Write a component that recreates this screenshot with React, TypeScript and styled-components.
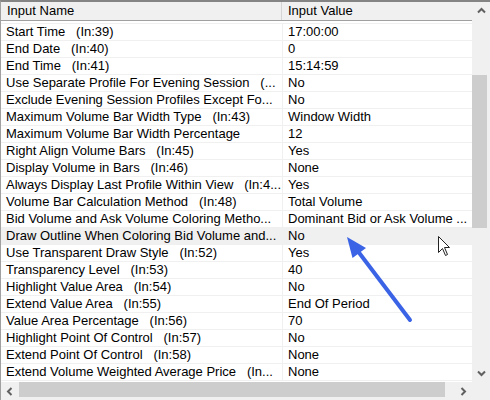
import styled, { createGlobalStyle } from "styled-components";

type Input = { name: string; value: string };

const inputs: Input[] = [
  { name: "Start Time   (In:39)", value: "17:00:00" },
  { name: "End Date   (In:40)", value: "0" },
  { name: "End Time   (In:41)", value: "15:14:59" },
  { name: "Use Separate Profile For Evening Session   (...", value: "No" },
  { name: "Exclude Evening Session Profiles Except Fo...", value: "No" },
  { name: "Maximum Volume Bar Width Type   (In:43)", value: "Window Width" },
  { name: "Maximum Volume Bar Width Percentage", value: "12" },
  { name: "Right Align Volume Bars   (In:45)", value: "Yes" },
  { name: "Display Volume in Bars   (In:46)", value: "None" },
  { name: "Always Display Last Profile Within View   (In:4...", value: "Yes" },
  { name: "Volume Bar Calculation Method   (In:48)", value: "Total Volume" },
  { name: "Bid Volume and Ask Volume Coloring Metho...", value: "Dominant Bid or Ask Volume ..." },
  { name: "Draw Outline When Coloring Bid Volume and...", value: "No" },
  { name: "Use Transparent Draw Style   (In:52)", value: "Yes" },
  { name: "Transparency Level   (In:53)", value: "40" },
  { name: "Highlight Value Area   (In:54)", value: "No" },
  { name: "Extend Value Area   (In:55)", value: "End Of Period" },
  { name: "Value Area Percentage   (In:56)", value: "70" },
  { name: "Highlight Point Of Control   (In:57)", value: "No" },
  { name: "Extend Point Of Control   (In:58)", value: "None" },
  { name: "Extend Volume Weighted Average Price   (In...", value: "None" },
];

const SELECTED = 12;

const Chevron = ({ dir }: { dir: "up" | "down" | "left" | "right" }) => {
  const rot = { up: 0, right: 90, down: 180, left: 270 }[dir];
  return (
    <svg width="9" height="9" viewBox="0 0 9 9" style={{ transform: `rotate(${rot}deg)` }}>
      <polyline points="1,6.5 4.5,3 8,6.5" fill="none" stroke="#606060" strokeWidth="2" />
    </svg>
  );
};

const App = () => {
  return (
    <Wrapper>
      <GlobalStyle />
      <Frame>
        <Table>
          <HeaderRow>
            <HeaderCell $divider>Input Name</HeaderCell>
            <HeaderCell>Input Value</HeaderCell>
          </HeaderRow>
          <Body>
            {inputs.map((input, i) => (
              <Row key={i} $selected={i === SELECTED}>
                <NameCell>{input.name}</NameCell>
                <ValueCell>{input.value}</ValueCell>
              </Row>
            ))}
          </Body>
        </Table>
        <VScroll>
          <ArrowButton $vertical>
            <Chevron dir="up" />
          </ArrowButton>
          <VTrack>
            <VThumb />
          </VTrack>
          <ArrowButton $vertical>
            <Chevron dir="down" />
          </ArrowButton>
        </VScroll>
        <HScroll>
          <ArrowButton>
            <Chevron dir="left" />
          </ArrowButton>
          <HTrack>
            <HThumb />
          </HTrack>
          <ArrowButton>
            <Chevron dir="right" />
          </ArrowButton>
        </HScroll>
        <Corner />
      </Frame>

      {/* callout arrow and mouse pointer */}
      <Overlay width="490" height="400" viewBox="0 0 490 400">
        <line x1="410" y1="320" x2="357" y2="250" stroke="#3b63e6" strokeWidth="4" strokeLinecap="round" />
        <polygon points="347,237 366,248 352.5,258" fill="#3b63e6" />
        <path
          d="M438.5 236.5 L438.5 252.5 L442.5 248.5 L445.5 255.5 L447.5 254.5 L444.5 247.5 L449.5 247.5 Z"
          fill="#fff"
          stroke="#222"
          strokeWidth="1"
          strokeLinejoin="round"
        />
      </Overlay>
    </Wrapper>
  );
};

export default App;

const GlobalStyle = createGlobalStyle`
  body {
    margin: 0;
    background: #fff;
    font-family: "Liberation Sans", Arial, sans-serif;
  }
`;

const Wrapper = styled.div`
  position: relative;
  width: 490px;
  height: 400px;
`;

const Frame = styled.div`
  box-sizing: border-box;
  width: 490px;
  height: 400px;
  border-top: 2px solid #848484;
  border-left: 1px solid #a0a0a0;
  display: grid;
  grid-template-columns: 471px 18px;
  grid-template-rows: 380px 18px;
  background: #fff;
  overflow: hidden;
  font-size: 13px;
  color: #000;
`;

const Table = styled.div`
  display: flex;
  flex-direction: column;
  overflow: hidden;
`;

const HeaderRow = styled.div`
  display: grid;
  grid-template-columns: 281px 1fr;
  height: 19px;
  box-sizing: border-box;
  background: #f0f0f0;
  border-bottom: 1px solid #a0a0a0;
`;

const HeaderCell = styled.div<{ $divider?: boolean }>`
  padding-left: 6px;
  line-height: 18px;
  white-space: pre;
  border-right: ${(p) => (p.$divider ? "1px solid #d5d5d5" : "none")};
`;

const Body = styled.div`
  padding-top: 2px;
`;

const Row = styled.div<{ $selected?: boolean }>`
  display: grid;
  grid-template-columns: 282px 1fr;
  height: 17px;
  box-sizing: border-box;
  border-top: 1px solid #f0f0f0;
  background: ${(p) => (p.$selected ? "#f0f0f0" : "#fff")};

  &:last-child {
    height: 18px;
    border-bottom: 1px solid #f0f0f0;
  }
`;

const NameCell = styled.div`
  padding-left: 5px;
  line-height: 16px;
  white-space: pre;
  overflow: hidden;
  border-right: 1px solid #f0f0f0;
`;

const ValueCell = styled.div`
  padding-left: 5px;
  line-height: 16px;
  white-space: pre;
  overflow: hidden;
`;

const VScroll = styled.div`
  display: flex;
  flex-direction: column;
  background: #f0f0f0;
`;

const HScroll = styled.div`
  display: flex;
  background: #f0f0f0;
`;

const ArrowButton = styled.div<{ $vertical?: boolean }>`
  flex: none;
  width: ${(p) => (p.$vertical ? "auto" : "17px")};
  height: ${(p) => (p.$vertical ? "17px" : "auto")};
  display: flex;
  align-items: center;
  justify-content: center;
`;

const VTrack = styled.div`
  flex: 1;
`;

const VThumb = styled.div`
  margin-top: 56px;
  width: 15px;
  height: 153px;
  background: #cdcdcd;
`;

const HTrack = styled.div`
  flex: 1;
  padding-left: 1px;
`;

const HThumb = styled.div`
  width: 426px;
  height: 15px;
  background: #cdcdcd;
`;

const Corner = styled.div`
  background: #f0f0f0;
`;

const Overlay = styled.svg`
  position: absolute;
  left: 0;
  top: 0;
  pointer-events: none;
`;
